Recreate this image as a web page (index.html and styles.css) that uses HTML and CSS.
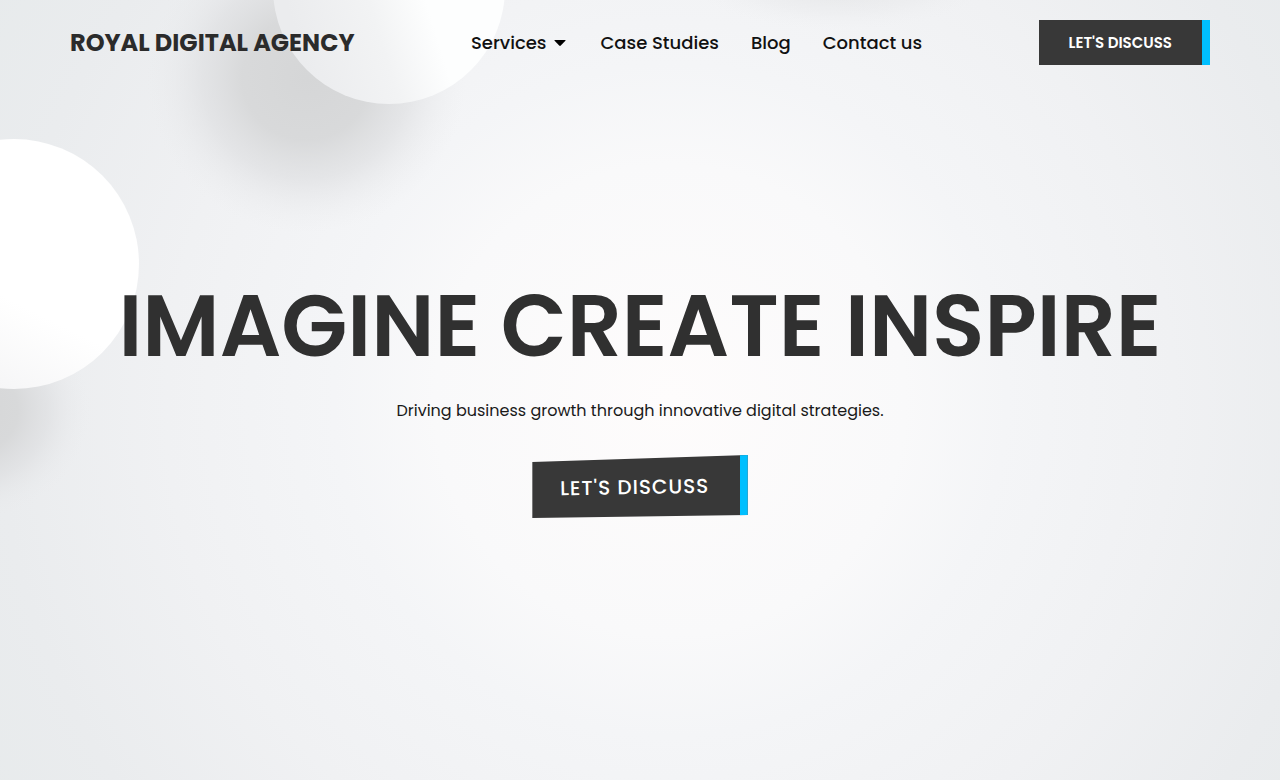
FILE: index.html
```html
<!DOCTYPE html>
<html lang="en">
<head>
    <meta charset="UTF-8">
    <meta name="viewport" content="width=device-width, initial-scale=1.0">
    <title>Royal Digital Agency</title>
    <link rel="stylesheet" href="styles.css">
</head>
<body>
    <!-- Background artwork -->
    <svg class="backdrop" viewBox="0 0 1280 780" preserveAspectRatio="xMinYMin slice" aria-hidden="true">
        <defs>
            <radialGradient id="glow" gradientUnits="userSpaceOnUse" cx="670" cy="400" r="840">
                <stop offset="0" stop-color="#fefcfc"/>
                <stop offset="0.28" stop-color="#f9f9fa"/>
                <stop offset="0.4" stop-color="#f4f5f7"/>
                <stop offset="0.6" stop-color="#f0f1f3"/>
                <stop offset="0.8" stop-color="#eaecee"/>
                <stop offset="1" stop-color="#e6eaeb"/>
            </radialGradient>
            <radialGradient id="shade">
                <stop offset="0" stop-color="#d5d6d7"/>
                <stop offset="0.4" stop-color="#d7d8d9" stop-opacity="0.95"/>
                <stop offset="0.65" stop-color="#dddee0" stop-opacity="0.65"/>
                <stop offset="0.85" stop-color="#e4e5e7" stop-opacity="0.25"/>
                <stop offset="1" stop-color="#eaebed" stop-opacity="0"/>
            </radialGradient>
            <linearGradient id="ball" x1="0.1" y1="0.7" x2="0.75" y2="0.5">
                <stop offset="0" stop-color="#ebecee"/>
                <stop offset="0.5" stop-color="#f2f3f4"/>
                <stop offset="0.85" stop-color="#fdfefe"/>
            </linearGradient>
            <linearGradient id="ballLeft" x1="0.45" y1="1" x2="0.6" y2="0.7">
                <stop offset="0" stop-color="#f6f6f7"/>
                <stop offset="1" stop-color="#ffffff"/>
            </linearGradient>
        </defs>
        <rect width="1280" height="780" fill="url(#glow)"/>
        <ellipse cx="306" cy="78" rx="160" ry="155" fill="url(#shade)"/>
        <ellipse cx="-30" cy="410" rx="120" ry="110" fill="url(#shade)"/>
        <ellipse cx="840" cy="-20" rx="150" ry="50" fill="url(#shade)" opacity="0.3"/>
        <circle cx="389" cy="-12" r="116" fill="url(#ball)"/>
        <circle cx="14" cy="264" r="125" fill="url(#ballLeft)"/>
    </svg>

    <header class="header">
        <a class="logo" href="#">ROYAL DIGITAL AGENCY</a>
        <nav class="nav">
            <a class="nav-dropdown" href="#">
                Services
                <svg class="caret" viewBox="0 0 14 6" aria-hidden="true"><path d="M1 0h10q1 0 .4.8L6.8 5.5q-.8.8-1.6 0L.6.8Q0 0 1 0z"/></svg>
            </a>
            <a href="#">Case Studies</a>
            <a href="#">Blog</a>
            <a href="#">Contact us</a>
        </nav>
        <button class="btn" type="button">LET'S DISCUSS</button>
    </header>

    <main class="hero">
        <h1>IMAGINE CREATE INSPIRE</h1>
        <p>Driving business growth through innovative digital strategies.</p>
        <button class="btn btn-tilted" type="button"><span>LET'S DISCUSS</span></button>
    </main>
</body>
</html>
```
FILE: styles.css
```css
:root {
    --dark: #383838;
    --heading: #303030;
    --text: #1a1a1a;
    --accent: #00bfff;
}

* {
    box-sizing: border-box;
}

body {
    font-family: Poppins, Inter, "Open Sans", sans-serif;
    margin: 0;
    min-height: 100vh;
    display: flex;
    flex-direction: column;
    background-color: #f2f3f4;
    color: var(--text);
}

.backdrop {
    position: absolute;
    top: 0;
    left: 0;
    width: 100%;
    height: 100%;
    z-index: -1;
}

/* Header */
.header {
    display: flex;
    justify-content: space-between;
    align-items: center;
    padding: 20px 70px;
}

.logo {
    color: #2b2b2b;
    font-size: 24px;
    font-weight: 700;
    text-decoration: none;
    white-space: nowrap;
}

.nav {
    display: flex;
    gap: 32px;
}

.nav a {
    color: #111;
    font-size: 18px;
    font-weight: 500;
    text-decoration: none;
    white-space: nowrap;
}

.nav .nav-dropdown {
    display: flex;
    align-items: center;
    gap: 8px;
}

.caret {
    width: 14px;
    height: 6px;
}

/* Buttons */
.btn {
    height: 45px;
    padding: 0 30px;
    border: 0;
    border-right: 8px solid var(--accent);
    background-color: var(--dark);
    color: white;
    font-family: inherit;
    font-size: 15px;
    font-weight: 600;
    white-space: nowrap;
    cursor: pointer;
}

.btn-tilted {
    height: 63px;
    padding: 0 30px 0 28px;
    font-size: 20px;
    font-weight: 500;
    letter-spacing: 1px;
    clip-path: polygon(0 7px, 100% 0, 100% 60px, 0 100%);
}

.btn-tilted span {
    display: inline-block;
    transform: rotate(-1deg);
}

/* Hero */
.hero {
    flex: 1;
    display: flex;
    flex-direction: column;
    align-items: center;
    justify-content: center;
    padding: 0 20px 64px;
    text-align: center;
}

.hero h1 {
    margin: 0;
    color: var(--heading);
    font-size: 86px;
    font-weight: 600;
    line-height: 86px;
}

.hero p {
    margin: 28px 0 30px;
    font-size: 16px;
    line-height: 28px;
}
```
